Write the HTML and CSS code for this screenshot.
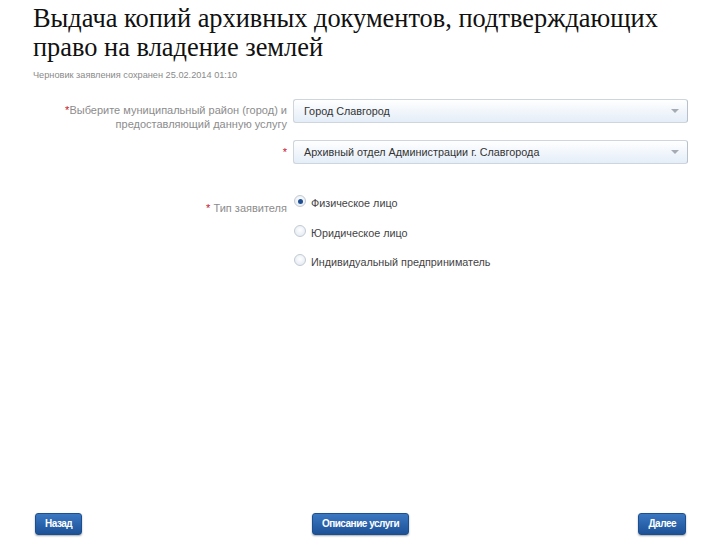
FILE: index.html
```html
<!DOCTYPE html>
<html lang="ru">
<head>
<meta charset="utf-8">
<title>Выдача копий архивных документов</title>
<link rel="stylesheet" href="styles.css">
</head>
<body>
<div class="page">
  <h1 class="title">Выдача копий архивных документов, подтверждающих право на владение землей</h1>
  <div class="draft">Черновик заявления сохранен 25.02.2014 01:10</div>

  <div class="form">
    <div class="label label-two"><span class="req">*</span>Выберите муниципальный район (город) и<br>предоставляющий данную услугу</div>
    <div class="select"><span class="select-text">Город Славгород</span><span class="arrow"></span></div>

    <div class="label label-one"><span class="req">*</span></div>
    <div class="select"><span class="select-text">Архивный отдел Администрации г. Славгорода</span><span class="arrow"></span></div>

    <div class="label label-radio"><span class="req">*</span> Тип заявителя</div>
    <div class="radios">
      <div class="radio-item"><span class="radio checked"></span><span class="radio-text">Физическое лицо</span></div>
      <div class="radio-item"><span class="radio"></span><span class="radio-text">Юридическое лицо</span></div>
      <div class="radio-item"><span class="radio"></span><span class="radio-text">Индивидуальный предприниматель</span></div>
    </div>
  </div>

  <div class="footer">
    <button class="btn">Назад</button>
    <button class="btn">Описание услуги</button>
    <button class="btn">Далее</button>
  </div>
</div>
</body>
</html>
```
FILE: styles.css
```css
html, body {
  margin: 0;
  padding: 0;
  background: #ffffff;
}

.page {
  width: 720px;
  height: 540px;
  box-sizing: border-box;
  padding: 4px 33px 5px 33px;
  display: flex;
  flex-direction: column;
  font-family: "Liberation Sans", Arial, sans-serif;
}

.title {
  margin: 0;
  font-family: "Liberation Serif", "Times New Roman", serif;
  font-weight: normal;
  font-size: 26.4px;
  line-height: 29px;
  color: #111;
  width: 660px;
}

.draft {
  margin-top: 7px;
  font-size: 9.2px;
  line-height: 12px;
  color: #8a8a8a;
}

.form {
  margin-top: 18px;
  display: grid;
  grid-template-columns: 254px 395px;
  column-gap: 6px;
  align-items: start;
}

.label {
  text-align: right;
  font-size: 11px;
  line-height: 14px;
  color: #8c8c8c;
}

.label-two {
  padding-top: 4px;
  height: 28px;
  margin-bottom: 9px;
}

.label-one {
  padding-top: 5px;
  margin-bottom: 34px;
}

.label-radio {
  padding-top: 8px;
}

.req {
  color: #c8102e;
}

.select {
  height: 24px;
  box-sizing: border-box;
  border: 1px solid #cfd5dc;
  border-right-color: #b8c0ca;
  border-radius: 3px;
  background: linear-gradient(#ffffff, #e4edf8);
  display: flex;
  align-items: center;
  justify-content: space-between;
  padding: 0 8px 0 10px;
}

.select-text {
  font-size: 10.8px;
  color: #333;
}

.arrow {
  width: 0;
  height: 0;
  border-left: 4px solid transparent;
  border-right: 4px solid transparent;
  border-top: 4px solid #a5abb2;
}

.radios {
  display: flex;
  flex-direction: column;
}

.radio-item {
  height: 29.5px;
  display: flex;
  align-items: flex-start;
  padding-top: 2px;
  box-sizing: border-box;
}

.radio {
  width: 12px;
  height: 12px;
  box-sizing: border-box;
  border: 1px solid #c3cad3;
  border-radius: 50%;
  background: radial-gradient(circle at 50% 40%, #ffffff, #dfe7f1);
  margin: 0 5px 0 1px;
  display: flex;
  align-items: center;
  justify-content: center;
}

.radio.checked::after {
  content: "";
  width: 5px;
  height: 5px;
  border-radius: 50%;
  background: #1d4f92;
}

.radio-text {
  font-size: 10.8px;
  line-height: 14px;
  color: #444;
  margin-top: 1px;
}

.footer {
  margin-top: auto;
  display: grid;
  grid-template-columns: 1fr auto 1fr;
  align-items: center;
  padding: 0 1px 0 2px;
}

.footer .btn:first-child {
  justify-self: start;
}

.footer .btn:last-child {
  justify-self: end;
}

.btn {
  height: 22px;
  padding: 0 9px;
  border: 1px solid #1c4f8f;
  border-radius: 3px;
  background: linear-gradient(#3a78c2, #1d5197);
  box-shadow: 0 1px 2px rgba(0, 0, 0, 0.35);
  color: #ffffff;
  font-family: "Liberation Sans Narrow", "Liberation Sans", Arial, sans-serif;
  font-weight: bold;
  font-size: 10px;
  letter-spacing: -0.5px;
  line-height: 20px;
  cursor: pointer;
}
```
